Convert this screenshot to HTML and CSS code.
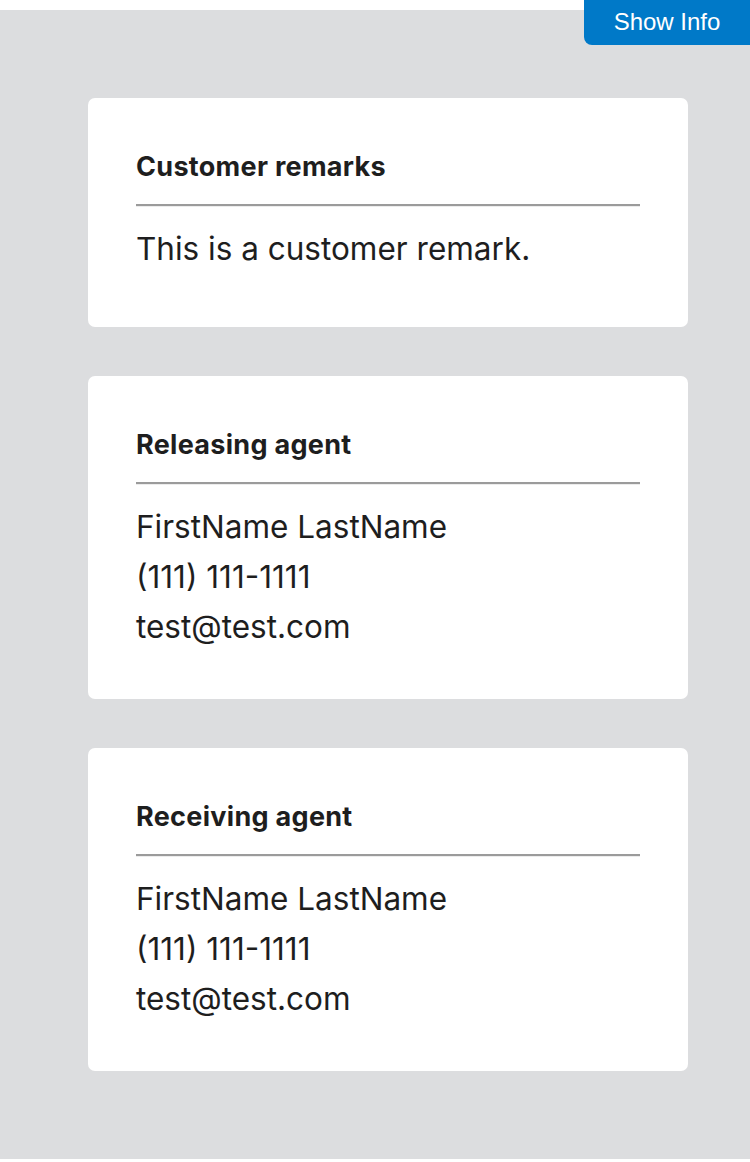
FILE: index.html
```html
<!DOCTYPE html>
<html lang="en">
<head>
<meta charset="utf-8">
<title>Agents</title>
<link rel="stylesheet" href="styles.css">
</head>
<body>
<button class="show-info" type="button">Show Info</button>
<main class="page">
  <section class="card card--remarks">
    <h2 class="card__title">Customer remarks</h2>
    <hr class="card__rule">
    <p class="card__line">This is a customer remark.</p>
  </section>
  <section class="card">
    <h2 class="card__title">Releasing agent</h2>
    <hr class="card__rule">
    <p class="card__line">FirstName LastName</p>
    <p class="card__line">(111) 111-1111</p>
    <p class="card__line">test@test.com</p>
  </section>
  <section class="card">
    <h2 class="card__title">Receiving agent</h2>
    <hr class="card__rule">
    <p class="card__line">FirstName LastName</p>
    <p class="card__line">(111) 111-1111</p>
    <p class="card__line">test@test.com</p>
  </section>
</main>
</body>
</html>
```

FILE: styles.css
```css
html, body {
  margin: 0;
  padding: 0;
  background: #ffffff;
}

body {
  font-family: Inter, "Noto Sans", sans-serif;
  color: #1e1e1e;
  position: relative;
  min-height: 1162px;
}

.show-info {
  position: absolute;
  top: 0;
  right: 0;
  width: 166px;
  height: 45px;
  border: 0;
  margin: 0;
  padding: 0 0 1px;
  background: #0079c8;
  color: #ffffff;
  font-family: "Liberation Sans", Arial, sans-serif;
  font-size: 24px;
  border-bottom-left-radius: 8px;
  cursor: pointer;
}

.page {
  margin-top: 10px;
  background: #dcdddf;
  padding: 88px;
  display: flex;
  flex-direction: column;
  align-items: flex-start;
  gap: 49px;
}

.card {
  box-sizing: border-box;
  width: 600px;
  background: #ffffff;
  border-radius: 7px;
  padding: 53px 48px 47px;
}

.card--remarks {
  padding-bottom: 53px;
}

.card__title {
  margin: 0;
  font-size: 27px;
  line-height: 32px;
  font-weight: 700;
  letter-spacing: 0.3px;
}

.card__rule {
  margin: 21px 0 17px;
  height: 0;
  border: 0;
  border-top: 2px solid #9b9b9b;
  border-bottom: 1px solid #ececec;
}

.card__line {
  margin: 0;
  font-size: 31.5px;
  line-height: 50px;
  font-weight: 400;
}
```
